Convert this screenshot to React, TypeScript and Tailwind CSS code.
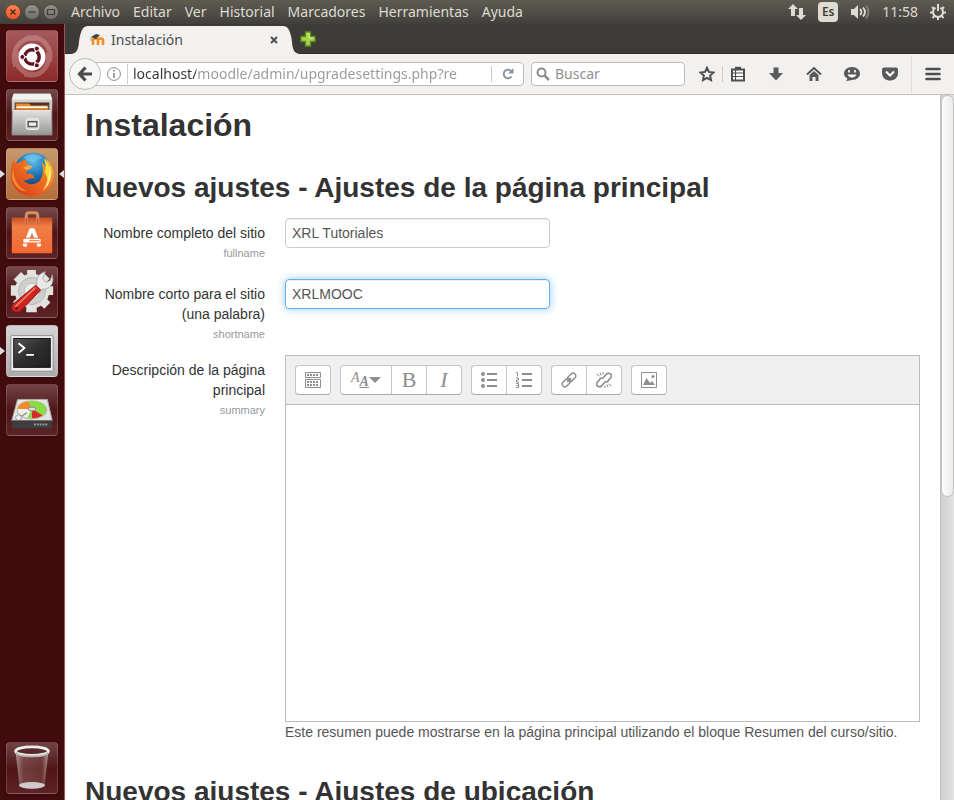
import { useState } from "react";
import type { ReactNode } from "react";

const menus = ["Archivo", "Editar", "Ver", "Historial", "Marcadores", "Herramientas", "Ayuda"];

function DashIcon() {
    return (
        <svg viewBox="0 0 52 52" className="h-full w-full">
            <g fill="none" stroke="#e9b9b9" strokeWidth="5" opacity="0.35">
                <path d="M9 37C3 18 15 6 30 8" />
                <path d="M19 8c17-5 29 8 25 24" />
                <path d="M43 22c2 17-9 27-25 23" />
                <path d="M32 45C15 47 5 33 11 20" />
            </g>
            <circle cx="26" cy="27" r="14" fill="#fff" />
            <circle cx="26" cy="27" r="7.500" fill="none" stroke="#611420" strokeWidth="3.500" strokeDasharray="13.700 2" strokeDashoffset="6.850" />
            <g fill="#611420" stroke="#fff" strokeWidth="1">
                <circle cx="16" cy="27" r="2.600" />
                <circle cx="31" cy="18.300" r="2.600" />
                <circle cx="31" cy="35.700" r="2.600" />
            </g>
        </svg>
    );
}

function FilesIcon() {
    return (
        <svg viewBox="0 0 52 52" className="h-full w-full">
            <defs>
                <linearGradient id="cabinet" x1="0" y1="0" x2="0" y2="1">
                    <stop offset="0" stopColor="#e2e2e0" />
                    <stop offset="1" stopColor="#969694" />
                </linearGradient>
            </defs>
            <path d="M7 4h38l2 6v35H5V10z" fill="url(#cabinet)" />
            <path d="M7 4h38l2 6H5z" fill="#f2f2f0" />
            <path d="M8 13h36v9H8z" fill="#4e3328" />
            <path d="M9 14h14l2 2h18v7H9z" fill="#ec8b2c" />
            <path d="M10 17h32v2H10z" fill="#fff" />
            <path d="M9 19h34v3H9z" fill="#e67a25" />
            <path d="M6 21h40l1 26H5z" fill="url(#cabinet)" stroke="#777" strokeWidth="0.5" />
            <path d="M6 21.5h40" stroke="#eee" />
            <rect x="20" y="30" width="13" height="11" rx="2" fill="#d9d9d7" stroke="#f5f5f5" />
            <rect x="22" y="33" width="9" height="5" fill="#eee" stroke="#555" strokeWidth="1.5" />
        </svg>
    );
}

function FirefoxIcon() {
    return (
        <svg viewBox="0 0 52 52" className="h-full w-full">
            <defs>
                <radialGradient id="globe" cx="0.5" cy="0.2" r="0.8">
                    <stop offset="0" stopColor="#63c3ed" />
                    <stop offset="0.5" stopColor="#1d70ad" />
                    <stop offset="1" stopColor="#0c2f6c" />
                </radialGradient>
                <linearGradient id="fox" x1="0" y1="1" x2="1" y2="0">
                    <stop offset="0" stopColor="#d5371b" />
                    <stop offset="0.6" stopColor="#ee7220" />
                    <stop offset="1" stopColor="#f9c92e" />
                </linearGradient>
            </defs>
            <circle cx="27" cy="24" r="20" fill="url(#globe)" />
            <path d="M17 9c6-5 16-5 21 1-7-1-8 4-14 3-3-1-4-3-7-4z" fill="#75c8ec" opacity="0.6" />
            <path d="M7 9c0 3 1 4 2 6 4-1 7-3 12-4-1 3-1 5 1 6l4 1c0 2-2 3-5 4l-1 4c5-1 8 1 9 5-6-2-6 3-12 1 4 6 12 6 17 1 4-5 4-13 2-19 3 2 4 4 5 7 2-4 1-8-1-12 7 6 10 15 8 24-2 10-11 16-22 16C13 49 3 39 4 26c0-7 1-12 3-17z" fill="url(#fox)" />
            <path d="M38 9c9 8 10 22 3 31 2-8 1-12-2-16 2-5 1-10-1-15z" fill="#fadc3c" />
            <path d="M45 17c3 10 0 21-8 27 5-9 7-17 8-27z" fill="#fff09a" opacity="0.7" />
            <path d="M7 20c-1 10 4 20 14 24C12 44 5 36 5 27z" fill="#f58b2e" />
            <path d="M22 17l4 1c0 2-2 3-5 4-2-1-3-2-5-2z" fill="#f9a643" />
        </svg>
    );
}

function SoftwareIcon() {
    return (
        <svg viewBox="0 0 52 52" className="h-full w-full">
            <defs>
                <linearGradient id="bag" x1="0" y1="0" x2="0" y2="1">
                    <stop offset="0" stopColor="#c95021" />
                    <stop offset="0.25" stopColor="#f07e47" />
                    <stop offset="1" stopColor="#f26930" />
                </linearGradient>
            </defs>
            <path d="M5 10h42v37H5z" fill="url(#bag)" />
            <path d="M20 17V8q0-3 3-3h6q3 0 3 3v9" fill="none" stroke="#df8b62" strokeWidth="3" />
            <path d="M20 11v6M32 11v6" stroke="#a84824" strokeWidth="1" />
            <path d="M18 40l7-17h2l7 17" fill="none" stroke="#fff" strokeWidth="4" />
            <rect x="16" y="31" width="20" height="6" rx="2" fill="#f26930" />
            <rect x="17" y="32" width="18" height="4" rx="1" fill="#fff" />
            <path d="M23 34h11" stroke="#f26930" />
        </svg>
    );
}

function SettingsIcon() {
    return (
        <svg viewBox="0 0 52 52" className="h-full w-full">
            <g fill="#e2e2df">
                <circle cx="26" cy="25" r="18" />
                {[0, 45, 90, 135].map((angle) => (
                    <path key={angle} d="M21 3h9l1 44H20z" transform={`rotate(${angle} 26 25)`} />
                ))}
            </g>
            <circle cx="26" cy="25" r="14" fill="#cfcfcc" stroke="#b4b4b1" />
            <circle cx="26" cy="25" r="8" fill="#ecece9" stroke="#bbb" />
            <path d="M31 18c-1-7 3-12 9-13l-3 7 3 4 5-2 2-6c3 9-3 16-10 15l-4 4-6-5z" fill="#e9e9e7" stroke="#999" strokeWidth="0.7" />
            <path d="M30 19l5 5-21 22c-3 2-6 1-8-1s-1-5 1-7z" fill="#cb251e" stroke="#8e1715" />
            <path d="M29 22L9 41" stroke="#f07a6c" strokeWidth="2" strokeLinecap="round" />
            <circle cx="10" cy="43" r="1.5" fill="#611" />
        </svg>
    );
}

function TerminalIcon() {
    return (
        <svg viewBox="0 0 52 52" className="h-full w-full">
            <defs>
                <linearGradient id="screen" x1="0" y1="0" x2="1" y2="1">
                    <stop offset="0" stopColor="#555" />
                    <stop offset="0.5" stopColor="#2e2e2e" />
                    <stop offset="1" stopColor="#202020" />
                </linearGradient>
            </defs>
            <rect x="4" y="10" width="44" height="37" rx="1" fill="#eee" stroke="#8b8b8b" />
            <rect x="7" y="13" width="38" height="30" fill="url(#screen)" stroke="#111" />
            <path d="M12 18l6 5-6 5M20 30h8" fill="none" stroke="#fff" strokeWidth="2" />
        </svg>
    );
}

function DiskIcon() {
    return (
        <svg viewBox="0 0 52 52" className="h-full w-full">
            <path d="M11 16h31l5 21v8H5v-8z" fill="#383838" />
            <path d="M11 15h31l5 22H5z" fill="#e4e4e4" stroke="#aaa" />
            <ellipse cx="26" cy="26" rx="16" ry="10" fill="#bbb" />
            <ellipse cx="26" cy="25.500" rx="15" ry="9" fill="#8bdc46" />
            <path d="M26 25H11c0-4 5-7 11-8z" fill="#f28a2f" />
            <path d="M26 25H11c0 5 5 8 10 9z" fill="#f1f1ee" />
            <path d="M26 25v9.500c5 0 8-1 11-3z" fill="#d92b24" />
            <ellipse cx="26" cy="25" rx="4" ry="2" fill="#ddd" stroke="#888" />
            <path d="M12 34l9-5" stroke="#999" strokeWidth="1.500" />
            <circle cx="12" cy="34" r="3" fill="#eee" stroke="#999" />
            <path d="M5 37h42v8H5z" fill="#3d3d3d" />
            <path d="M28 41h14" stroke="#999" strokeWidth="2" strokeDasharray="2 1" />
        </svg>
    );
}

function TrashIcon() {
    return (
        <svg viewBox="0 0 52 52" className="h-full w-full">
            <defs>
                <linearGradient id="bin" x1="0" y1="0" x2="1" y2="0">
                    <stop offset="0" stopColor="#e5cece" stopOpacity="0.6" />
                    <stop offset="0.25" stopColor="#aa8080" stopOpacity="0.35" />
                    <stop offset="0.8" stopColor="#8d5a5a" stopOpacity="0.4" />
                    <stop offset="1" stopColor="#eed" stopOpacity="0.6" />
                </linearGradient>
            </defs>
            <path d="M9 10h34l-4 34c-2 5-24 5-26 0z" fill="url(#bin)" />
            <ellipse cx="26" cy="44" rx="13.500" ry="3.500" fill="#cfcbcb" />
            <ellipse cx="26" cy="8.500" rx="17" ry="4.500" fill="#5b2628" stroke="#eeeeec" strokeWidth="3" />
            <path d="M9 10c4 5 30 5 34 0" fill="none" stroke="#b9b9b7" strokeWidth="2" />
        </svg>
    );
}

const apps = [
    { name: "Inicio", icon: <DashIcon />, tile: "from-[#a45a5c] to-[#8c292b]" },
    { name: "Archivos", icon: <FilesIcon />, tile: "from-[#75494c] via-[#501518] to-[#5c2225]" },
    { name: "Firefox", icon: <FirefoxIcon />, tile: "from-[#c49a71] to-[#b46d37]", running: true, focused: true },
    { name: "Software de Ubuntu", icon: <SoftwareIcon />, tile: "from-[#75494c] via-[#501518] to-[#5c2225]" },
    { name: "Configuración", icon: <SettingsIcon />, tile: "from-[#75494c] via-[#501518] to-[#5c2225]" },
    { name: "Terminal", icon: <TerminalIcon />, tile: "from-[#d4d4d4] to-[#adadad]", running: true },
    { name: "Discos", icon: <DiskIcon />, tile: "from-[#714346] via-[#501518] to-[#5c2225]" },
];

function LauncherTile({ name, tile, running, focused, children }: { name: string; tile: string; running?: boolean; focused?: boolean; children: ReactNode }) {
    return (
        <div className="relative px-1.5">
            <button aria-label={name} className={`block h-[52px] w-[52px] rounded-[4px] border border-white/15 bg-linear-to-b shadow-sm ${tile}`}>
                {children}
            </button>
            {running && (
                <svg viewBox="0 0 5 8" className="absolute top-[22px] left-0 h-2 w-[5px]"><path d="M0 0l5 4-5 4z" fill="#ddd" /></svg>
            )}
            {focused && (
                <svg viewBox="0 0 5 8" className="absolute top-[22px] right-0 h-2 w-[5px]"><path d="M5 0L0 4l5 4z" fill="#ddd" /></svg>
            )}
        </div>
    );
}

function SystemBar() {
    return (
        <header className="flex h-6 shrink-0 items-center bg-linear-to-b from-[#5e5b50] via-[#504e47] to-[#403f3a] pr-2 pl-[5px] text-sm text-[#dfdbd2]">
            <div className="flex gap-[3px]">
                <button aria-label="Cerrar" className="h-4 w-4 rounded-full border border-[#8a4026] bg-linear-to-b from-[#f58458] to-[#e55a26]">
                    <svg viewBox="0 0 14 14"><path d="M4.500 4.500l5 5m0-5l-5 5" stroke="#4a251a" strokeWidth="1.300" /></svg>
                </button>
                <button aria-label="Minimizar" className="h-4 w-4 rounded-full border border-[#4b4a45] bg-linear-to-b from-[#94928a] to-[#706e67]">
                    <svg viewBox="0 0 14 14"><path d="M3.500 7h7" stroke="#3c3b37" strokeWidth="1.200" /></svg>
                </button>
                <button aria-label="Maximizar" className="h-4 w-4 rounded-full border border-[#4b4a45] bg-linear-to-b from-[#94928a] to-[#706e67]">
                    <svg viewBox="0 0 14 14"><path d="M3.500 4.500h7v5h-7z" fill="none" stroke="#3c3b37" strokeWidth="1.200" /></svg>
                </button>
            </div>
            <nav className="ml-3 flex gap-[13px]">
                {menus.map((menu) => (
                    <button key={menu}>{menu}</button>
                ))}
            </nav>
            <div className="ml-auto flex items-center gap-3">
                <svg viewBox="0 0 18 16" className="h-4 w-[18px]" fill="#dfdbd2">
                    <path d="M5 0l5 5H7v7H3V5H0zM13 16l-5-5h3V4h4v7h3z" />
                </svg>
                <button className="h-5 w-5 rounded-sm bg-[#dfdbd2] text-xs font-semibold text-[#3c3b37]">Es</button>
                <svg viewBox="0 0 20 16" className="h-4 w-5" fill="none" stroke="#dfdbd2" strokeWidth="1.800">
                    <path d="M1 5h3l4-4v14l-4-4H1z" fill="#dfdbd2" stroke="none" />
                    <path d="M10 5q3 3 0 6M13 3.500q4 4.500 0 9" />
                    <path d="M16 1.500q5 6.500 0 13" stroke="#85827a" />
                </svg>
                <time>11:58</time>
                <svg viewBox="0 0 16 16" className="h-4 w-4" fill="none" stroke="#dfdbd2" strokeWidth="2">
                    <path d="M5.500 3.700a5 5 0 1 0 5 0" />
                    <path d="M8 0v7M0 8.500h3M13 8.500h3M8 13v3M2 3l2 2M14 3l-2 2M2.500 14l2-2M13.500 14l-2-2" />
                </svg>
            </div>
        </header>
    );
}

function TabStrip() {
    return (
        <div className="flex h-[30px] shrink-0 items-end border-b border-[#2e2d2a] bg-[#3c3b37] pl-1.5">
            <svg viewBox="0 0 18 28" className="-mb-px h-7 w-[18px]"><path d="M0 28C9 27 7 18 9 10C11 2 13 0 18 0V28z" fill="#f2f1f0" /></svg>
            <div className="-mb-px flex h-7 w-[193px] items-center bg-[#f2f1f0] text-sm text-[#4c4c4c]">
                <svg viewBox="0 0 16 16" className="h-4 w-4">
                    <path d="M4 13V8.500q0-2 2.500-2T9 8.500V13M9 8.500q0-2 2.500-2t2.500 2V13" fill="none" stroke="#f68c24" strokeWidth="2.600" />
                    <path d="M2 5l5-3 4 1-4 4z" fill="#444" />
                    <path d="M2 5v4" stroke="#b99863" />
                </svg>
                <span className="ml-1.5">Instalación</span>
                <button aria-label="Cerrar pestaña" className="mr-1 ml-auto">
                    <svg viewBox="0 0 8 8" className="h-2 w-2"><path d="M1 1l6 6m0-6L1 7" stroke="#555" strokeWidth="2.200" /></svg>
                </button>
            </div>
            <svg viewBox="0 0 18 28" className="-mb-px h-7 w-[18px]"><path d="M18 28C9 27 11 18 9 10C7 2 5 0 0 0V28z" fill="#f2f1f0" /></svg>
            <button aria-label="Nueva pestaña" className="self-center">
                <svg viewBox="0 0 16 16" className="h-4 w-4"><path d="M5.500 1h5v4.500H15v5h-4.500V15h-5v-4.500H1v-5h4.500z" fill="#a6d34a" stroke="#5d8f22" strokeWidth="1.300" /><path d="M7 2.500h2V7h4.500" fill="none" stroke="#d4ee92" /></svg>
            </button>
        </div>
    );
}

const browserActions = [
    {
        name: "Marcadores",
        icon: (
            <g>
                <path d="M2 3.500h12v11H2z" fill="#fff" stroke="#4f4f4f" strokeWidth="2" />
                <path d="M5 0.800h6V4H5z" fill="#4f4f4f" />
                <path d="M2 7h12M2 10.500h12M5.500 4v10" stroke="#4f4f4f" strokeWidth="1.200" />
            </g>
        ),
    },
    { name: "Descargas", icon: <path d="M5.500 1.500h5V7H15l-7 7.500L1 7h4.500z" fill="#5a5a5a" /> },
    {
        name: "Inicio",
        icon: (
            <g>
                <path d="M1 8.500L8 2l7 6.500" fill="none" stroke="#4f4f4f" strokeWidth="1.800" />
                <path d="M3.500 9L8 5l4.500 4v6h-3v-4h-3v4h-3z" fill="#5a5a5a" />
            </g>
        ),
    },
    {
        name: "Hello",
        icon: (
            <g>
                <path d="M8 1c5 0 8 3 8 6.500S13 14 8 14c-2 0-3 1-6 1 1-1 1.500-2 1-3C1 11 0 9.500 0 7.500 0 4 3 1 8 1z" fill="#5a5a5a" />
                <path d="M3.500 8.500c1.500 4 7.500 4 9 0z" fill="#fff" />
                <path d="M5 4v2.500M11 4v2.500" stroke="#fff" strokeWidth="1.700" />
            </g>
        ),
    },
    {
        name: "Pocket",
        icon: (
            <g>
                <path d="M2 1.500h12q2 0 2 2V7c0 10-16 10-16 0V3.500q0-2 2-2z" fill="#5a5a5a" />
                <path d="M4 5.500L8 9.500l4-4" fill="none" stroke="#fff" strokeWidth="2" />
            </g>
        ),
    },
];

function NavBar() {
    return (
        <div className="flex h-[41px] shrink-0 items-center border-b border-[#c3c2c0] bg-[#f2f1f0] pl-1">
            <button aria-label="Atrás" className="relative z-10 flex h-8 w-8 shrink-0 items-center justify-center rounded-full border border-[#bcbbb9] bg-[#f7f7f6]">
                <svg viewBox="0 0 16 16" className="h-4 w-4" fill="none" stroke="#4b4b4b" strokeWidth="3.200"><path d="M8.500 1.500L2.500 8l6 6.500M3 8h12" /></svg>
            </button>
            <div className="-ml-4 flex h-6 min-w-0 flex-1 items-center rounded-r-sm border border-[#bcbbb9] bg-white pl-[21px]">
                <svg viewBox="0 0 14 14" className="h-3.5 w-3.5 shrink-0" fill="none" stroke="#8b8b8b"><circle cx="7" cy="7" r="6.400" /><path d="M7 3v1.500M7 6v5" strokeWidth="1.600" /></svg>
                <input
                    aria-label="Dirección"
                    defaultValue="localhost/moodle/admin/upgradesettings.php?re"
                    className="ml-1.5 h-5 min-w-0 flex-1 border-l border-[#d0d0d0] bg-[linear-gradient(to_right,#333333_68px,#999999_68px)] bg-clip-text pl-[5px] text-sm leading-5 text-transparent outline-none"
                />
                <button aria-label="Recargar" className="flex h-4 w-8 items-center justify-center border-l border-[#c8c8c8]">
                    <svg viewBox="0 0 12 12" className="h-3 w-3"><path d="M9.500 8.500a4.300 4.300 0 1 1 0-5" fill="none" stroke="#8b95a5" strokeWidth="2" /><path d="M11.500 0v5.500H6z" fill="#8b95a5" /></svg>
                </button>
            </div>
            <label className="ml-[7px] flex h-6 w-[154px] items-center rounded-sm border border-[#bcbbb9] bg-white px-1">
                <svg viewBox="0 0 14 14" className="h-3.5 w-3.5 shrink-0" fill="none" stroke="#8b8b8b" strokeWidth="2"><circle cx="5.500" cy="5.500" r="4" /><path d="M8.500 8.500l4.500 4.500" strokeWidth="2.500" /></svg>
                <input aria-label="Buscar" placeholder="Buscar" className="ml-[5px] w-full min-w-0 text-sm leading-5 outline-none placeholder:text-[#909090]" />
            </label>
            <button aria-label="Añadir a marcadores" className="ml-[7px] flex w-[30px] justify-center">
                <svg viewBox="0 0 16 16" className="h-4 w-4"><path d="M8 1.800l1.900 4.100 4.600.6-3.400 3 .9 4.600L8 11.900l-4 2.200.9-4.600-3.400-3 4.600-.6z" fill="none" stroke="#4f4f4f" strokeWidth="2" /></svg>
            </button>
            <div className="h-4 border-l border-[#cfcecc]" />
            <div className="flex gap-2">
                {browserActions.map((action) => (
                    <button key={action.name} aria-label={action.name} className="flex w-[30px] justify-center">
                        <svg viewBox="0 0 16 16" className="h-4 w-4">{action.icon}</svg>
                    </button>
                ))}
            </div>
            <div className="ml-1.5 h-9 border-l border-[#dddcda]" />
            <button aria-label="Menú" className="flex w-[42px] justify-center">
                <svg viewBox="0 0 16 14" className="h-3.5 w-4" stroke="#4f4f4f" strokeWidth="2.600" strokeLinecap="round"><path d="M1.500 2h13M1.500 7h13M1.500 12h13" /></svg>
            </button>
        </div>
    );
}

function ToolGroup({ children }: { children: ReactNode }) {
    return (
        <div className="flex h-[30px] divide-x divide-[#c5c5c5] rounded-[4px] border border-[#c5c5c5] border-b-[#aaa] bg-white">
            {children}
        </div>
    );
}

function ToolButton({ name, children }: { name: string; children: ReactNode }) {
    return (
        <button type="button" aria-label={name} className="flex w-[35px] items-center justify-center font-['Liberation_Serif',serif] text-[22px] leading-7 text-[#8e8e8e] last:w-[34px]">
            {children}
        </button>
    );
}

function EditorToolbar() {
    return (
        <div className="flex flex-wrap gap-[9px] border-b border-[#bbb] bg-[#f0f0f0] p-[9px]">
            <ToolGroup>
                <ToolButton name="Mostrar más botones">
                    <svg viewBox="0 0 16 16" className="h-4 w-4" fill="none" stroke="#8e8e8e">
                        <path d="M.5.5h15v5H.5zM.5 7.500h15v8H.5z" />
                        <path d="M2 3h12M2 10h12M2 13h12" strokeWidth="2" strokeDasharray="2 1" />
                    </svg>
                </ToolButton>
            </ToolGroup>
            <ToolGroup>
                <button type="button" aria-label="Estilos de párrafo" className="flex w-[51px] items-center justify-center font-['Liberation_Serif',serif] text-sm leading-4 text-[#8e8e8e] italic">
                    <span className="pb-1">A</span>
                    <span className="pt-1 font-bold underline">A</span>
                    <svg viewBox="0 0 12 6" className="h-1.5 w-3"><path d="M0 0h12L6 6z" fill="#8e8e8e" /></svg>
                </button>
                <ToolButton name="Negrita">B</ToolButton>
                <ToolButton name="Cursiva"><i>I</i></ToolButton>
            </ToolGroup>
            <ToolGroup>
                <ToolButton name="Lista sin orden">
                    <svg viewBox="0 0 16 16" className="h-4 w-4" fill="#8e8e8e"><circle cx="2" cy="2" r="2" /><circle cx="2" cy="8" r="2" /><circle cx="2" cy="14" r="2" /><path d="M6 1h10v2H6zM6 7h10v2H6zM6 13h10v2H6z" /></svg>
                </ToolButton>
                <ToolButton name="Lista ordenada">
                    <svg viewBox="0 0 16 16" className="h-4 w-4" fill="none" stroke="#8e8e8e"><path d="M6 2h10M6 8h10M6 14h10" strokeWidth="2" /><path d="M0 .5h1.500v4M0 6h2.500v2H.5v2H3M0 11.500h2.500v4H0M.5 13.500h2" /></svg>
                </ToolButton>
            </ToolGroup>
            <ToolGroup>
                <ToolButton name="Enlace">
                    <svg viewBox="0 0 16 16" className="h-4 w-4" fill="none" stroke="#8e8e8e" strokeWidth="1.500">
                        <rect x="-4.700" y="-2.700" width="9.400" height="5.400" rx="2.700" transform="translate(10.700 5.300) rotate(-45)" />
                        <rect x="-4.700" y="-2.700" width="9.400" height="5.400" rx="2.700" transform="translate(5.300 10.700) rotate(-45)" />
                        <path d="M6 10l4-4" strokeWidth="1.500" />
                    </svg>
                </ToolButton>
                <ToolButton name="Desenlazar">
                    <svg viewBox="0 0 16 16" className="h-4 w-4" fill="none" stroke="#8e8e8e" strokeWidth="1.700">
                        <path d="M7.500 5.500l3-3.500q2-1.500 4 0t0 4L11.500 9.500q-1.500 1-3 0M8.500 10.500l-3 3.500q-2 1.500-4 0t0-4L4.500 6.500q1.500-1 3 0" />
                        <path d="M.5 2l3 2M4 .5l1 3M7 0v2.500M15.500 14l-3-2M12 15.500l-1-3M9 16v-2.500" strokeWidth="1" />
                    </svg>
                </ToolButton>
            </ToolGroup>
            <ToolGroup>
                <ToolButton name="Imagen">
                    <svg viewBox="0 0 16 16" className="h-4 w-4"><path d="M.5.5h15v15H.5z" fill="none" stroke="#8e8e8e" /><path d="M2 13l3.500-7L9 11l2-2 3 4z" fill="#8e8e8e" /><circle cx="12" cy="4.500" r="1.500" fill="#8e8e8e" /></svg>
                </ToolButton>
            </ToolGroup>
        </div>
    );
}

function SettingRow({ id, label, setting, children }: { id: string; label: string; setting: string; children: ReactNode }) {
    return (
        <div className="flex gap-5">
            <div className="w-[180px] shrink-0 pt-[5px] text-right">
                <label htmlFor={id} className="block">{label}</label>
                <span className="block text-[11px] text-[#999]">{setting}</span>
            </div>
            <div className="min-w-0 flex-1">{children}</div>
        </div>
    );
}

export default function App() {
    const [fullname, setFullname] = useState("XRL Tutoriales");
    const [shortname, setShortname] = useState("XRLMOOC");
    const [summary, setSummary] = useState("");

    return (
        <div className="flex h-screen flex-col overflow-hidden bg-[#3c3b37] font-['Noto_Sans',sans-serif]">
            <SystemBar />
            <div className="flex min-h-0 flex-1">
                <aside className="flex w-[65px] shrink-0 flex-col gap-[7px] border-r border-[#a35349] bg-[#420b0d] py-1.5">
                    {apps.map((app) => (
                        <LauncherTile key={app.name} name={app.name} tile={app.tile} running={app.running} focused={app.focused}>
                            {app.icon}
                        </LauncherTile>
                    ))}
                    <div className="mt-auto">
                        <LauncherTile name="Papelera" tile="from-[#714346] via-[#501518] to-[#5c2225]">
                            <TrashIcon />
                        </LauncherTile>
                    </div>
                </aside>

                <div className="flex min-w-0 flex-1 flex-col">
                    <TabStrip />
                    <NavBar />
                    <div className="flex min-h-0 flex-1 bg-white">
                        <main className="min-w-0 flex-1 overflow-hidden px-5 pt-2.5 font-['Liberation_Sans',sans-serif] text-sm leading-5 text-[#333]">
                            <h1 className="text-[32px] leading-10 font-bold">Instalación</h1>
                            <h2 className="mt-[23px] mb-2.5 text-[28px] leading-10 font-bold">Nuevos ajustes - Ajustes de la página principal</h2>
                            <form className="flex flex-col">
                                <SettingRow id="fullname" label="Nombre completo del sitio" setting="fullname">
                                    <input
                                        id="fullname"
                                        value={fullname}
                                        onChange={(e) => setFullname(e.target.value)}
                                        className="block h-[30px] w-[265px] rounded-[4px] border border-[#ccc] px-1.5 text-[#555] shadow-[inset_0_1px_1px_rgba(0,0,0,0.075)] outline-none"
                                    />
                                </SettingRow>
                                <div className="mt-4">
                                    <SettingRow id="shortname" label="Nombre corto para el sitio (una palabra)" setting="shortname">
                                        <input
                                            id="shortname"
                                            value={shortname}
                                            onChange={(e) => setShortname(e.target.value)}
                                            className="block h-[30px] w-[265px] rounded-[4px] border border-[#66afe9] px-1.5 text-[#555] shadow-[inset_0_1px_1px_rgba(0,0,0,0.075),0_0_8px_rgba(82,168,236,0.6)] outline-none"
                                        />
                                    </SettingRow>
                                </div>
                                <div className="mt-[11px]">
                                    <SettingRow id="summary" label="Descripción de la página principal" setting="summary">
                                        <div className="border border-[#bbb]">
                                            <EditorToolbar />
                                            <textarea
                                                id="summary"
                                                value={summary}
                                                onChange={(e) => setSummary(e.target.value)}
                                                className="block h-[316px] w-full resize-none p-2 outline-none"
                                            />
                                        </div>
                                        <p className="text-[#555]">Este resumen puede mostrarse en la página principal utilizando el bloque Resumen del curso/sitio.</p>
                                    </SettingRow>
                                </div>
                            </form>
                            <h2 className="mt-[30px] text-[28px] leading-10 font-bold">Nuevos ajustes - Ajustes de ubicación</h2>
                        </main>
                        <div className="w-3.5 shrink-0 border-l border-[#c4c3c2] bg-linear-to-r from-[#d0d0d0] to-[#e2e2e2]">
                            <div className="h-[57%] rounded-[7px] border border-[#c4c3c2] bg-linear-to-r from-[#fdfdfd] to-[#ebebea]" />
                        </div>
                    </div>
                </div>
            </div>
        </div>
    );
}
